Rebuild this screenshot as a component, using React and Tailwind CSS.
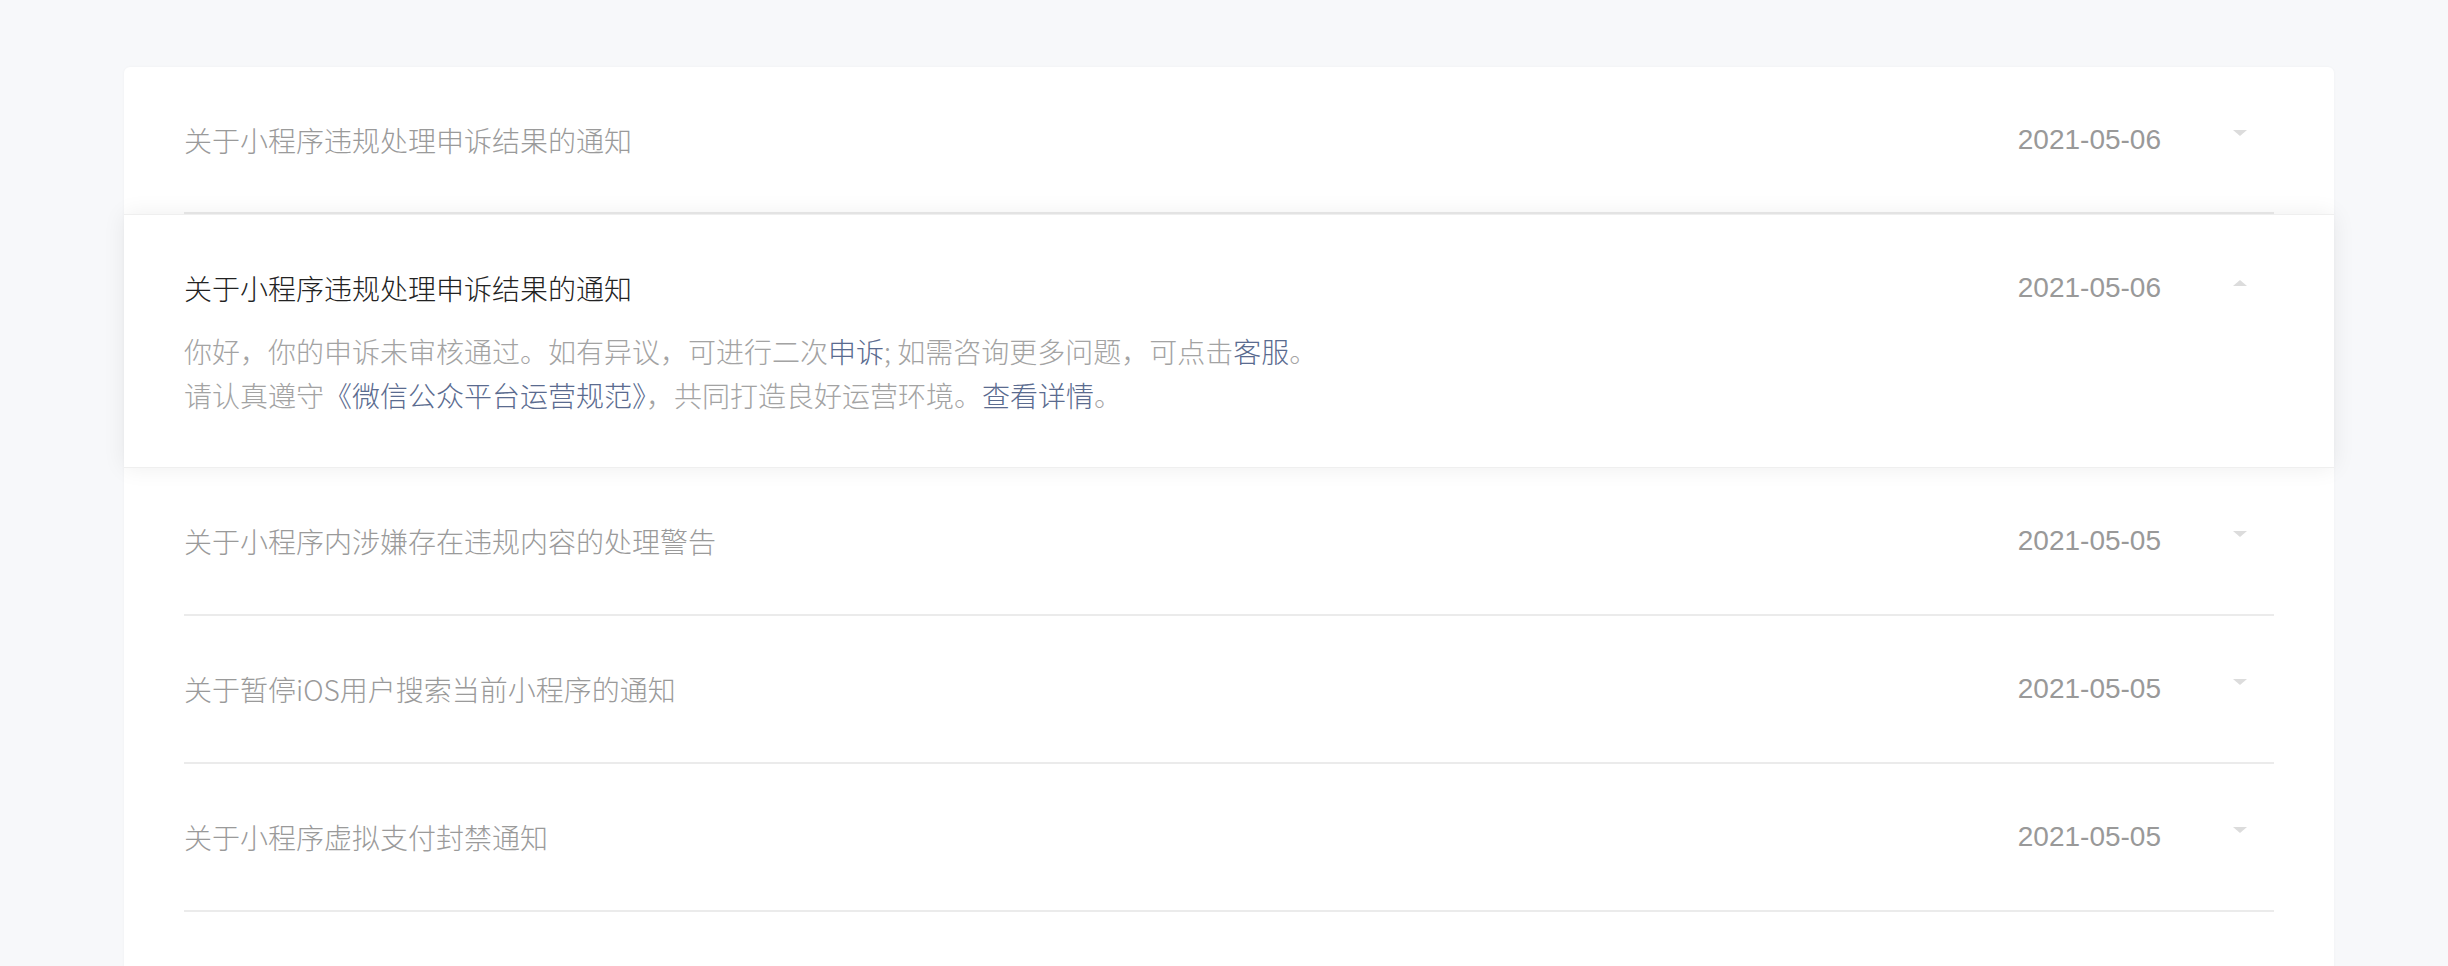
import React from 'react';

const notices = [
  { id: 1, title: '关于小程序违规处理申诉结果的通知', date: '2021-05-06' },
  { id: 2, title: '关于小程序违规处理申诉结果的通知', date: '2021-05-06', open: true },
  { id: 3, title: '关于小程序内涉嫌存在违规内容的处理警告', date: '2021-05-05' },
  { id: 4, title: '关于暂停iOS用户搜索当前小程序的通知', date: '2021-05-05' },
  { id: 5, title: '关于小程序虚拟支付封禁通知', date: '2021-05-05' },
];

const cjk = { fontFamily: '"Noto Sans CJK SC", "Noto Sans", sans-serif' };
const latin = { fontFamily: '"Liberation Sans", Arial, sans-serif' };

const Caret = ({ up }) =>
  up ? (
    <span className="block w-0 h-0 border-l-[7px] border-r-[7px] border-b-[6px] border-l-transparent border-r-transparent border-b-[#dcdcdc]" />
  ) : (
    <span className="block w-0 h-0 border-l-[7px] border-r-[7px] border-t-[6px] border-l-transparent border-r-transparent border-t-[#dcdcdc]" />
  );

const DateCol = ({ date, up }) => (
  <div className="flex items-center shrink-0">
    <span className="text-[28px] leading-[40px] text-[#999999]" style={latin}>
      {date}
    </span>
    <div className={`ml-[71px] w-[15px] mr-[27px] flex justify-center ${up ? 'mb-[10px]' : 'mb-[14px]'}`}>
      <Caret up={up} />
    </div>
  </div>
);

const Link = ({ children }) => <span className="text-[#5a6b8f]">{children}</span>;

const Row = ({ item, first }) => (
  <div className="px-[60px]">
    <div
      className={`flex items-center border-b-2 border-[#ebebeb] ${first ? 'h-[147px]' : 'h-[148px]'}`}
    >
      <div className="flex-1 text-[28px] leading-[40px] font-light text-[#9a9a9a]" style={cjk}>
        {item.title}
      </div>
      <DateCol date={item.date} />
    </div>
  </div>
);

const OpenRow = ({ item }) => (
  <div className="relative bg-white shadow-[0_0_22px_rgba(0,0,0,0.07)] border-y border-[#efefef] px-[60px] pt-[53px] pb-[50px]">
    <div className="flex items-start">
      <div className="flex-1" style={cjk}>
        <div className="text-[28px] leading-[40px] font-light text-[#222222]">{item.title}</div>
        <div className="mt-[21px] text-[28px] leading-[44px] font-light text-[#a3a3a3]">
          <div>
            你好，你的申诉未审核通过。如有异议，可进行二次<Link>申诉</Link>; 如需咨询更多问题，可点击<Link>客服</Link>。
          </div>
          <div>
            请认真遵守<Link>《微信公众平台运营规范》</Link>，共同打造良好运营环境。<Link>查看详情</Link>。
          </div>
        </div>
      </div>
      <DateCol date={item.date} up />
    </div>
  </div>
);

export default function App() {
  return (
    <div className="min-h-screen bg-[#f7f8fa] pt-[67px] pl-[124px] pr-[114px]">
      <div className="bg-white rounded-[6px] shadow-[0_0_3px_rgba(0,0,0,0.04)] pb-[120px]">
        {notices.map((item, i) =>
          item.open ? <OpenRow key={item.id} item={item} /> : <Row key={item.id} item={item} first={i === 0} />
        )}
      </div>
    </div>
  );
}
